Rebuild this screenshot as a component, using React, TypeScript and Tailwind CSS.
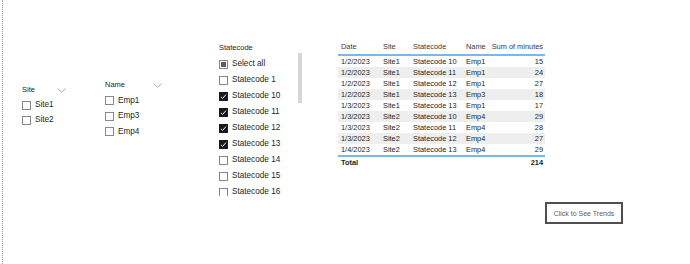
import React from "react";

const rows = [
  ["1/2/2023", "Site1", "Statecode 10", "Emp1", "15"],
  ["1/2/2023", "Site1", "Statecode 11", "Emp1", "24"],
  ["1/2/2023", "Site1", "Statecode 12", "Emp1", "27"],
  ["1/2/2023", "Site1", "Statecode 13", "Emp3", "18"],
  ["1/3/2023", "Site1", "Statecode 13", "Emp1", "17"],
  ["1/3/2023", "Site2", "Statecode 10", "Emp4", "29"],
  ["1/3/2023", "Site2", "Statecode 11", "Emp4", "28"],
  ["1/3/2023", "Site2", "Statecode 12", "Emp4", "27"],
  ["1/4/2023", "Site2", "Statecode 13", "Emp4", "29"],
];

const statecodes = [
  { label: "Statecode 1", checked: false },
  { label: "Statecode 10", checked: true },
  { label: "Statecode 11", checked: true },
  { label: "Statecode 12", checked: true },
  { label: "Statecode 13", checked: true },
  { label: "Statecode 14", checked: false },
  { label: "Statecode 15", checked: false },
  { label: "Statecode 16", checked: false },
];

function Chevron() {
  return (
    <svg width="9" height="5" viewBox="0 0 9 5" className="shrink-0">
      <path d="M0.5 0.5 L4.5 4.2 L8.5 0.5" fill="none" stroke="#a19f9d" strokeWidth="0.9" />
    </svg>
  );
}

function Box({ checked }: { checked?: boolean }) {
  if (checked) {
    return (
      <div className="w-[9px] h-[9px] shrink-0 bg-[#1b1a19] flex items-center justify-center">
        <svg width="7" height="7" viewBox="0 0 7 7">
          <path d="M1 3.8 L2.7 5.4 L6 1.6" fill="none" stroke="#ffffff" strokeWidth="0.9" />
        </svg>
      </div>
    );
  }
  return <div className="w-[9px] h-[9px] shrink-0 border border-[#8a8886] bg-white" />;
}

function Item({ label, checked, h }: { label: string; checked?: boolean; h: string }) {
  return (
    <div className={`flex items-center gap-[4px] ${h}`}>
      <Box checked={checked} />
      <span className="text-[8.2px] leading-none text-[#201f1e]">{label}</span>
    </div>
  );
}

export default function App() {
  return (
    <div
      className="w-[690px] h-[264px] bg-white flex overflow-hidden"
      style={{ fontFamily: '"Liberation Sans", Arial, sans-serif' }}
    >
      {/* page edge */}
      <div className="ml-[2px] h-full w-0 border-l border-dotted border-[#a19f9d]" />

      {/* Site slicer */}
      <div className="ml-[19px] mt-[85px] w-[44px] flex flex-col">
        <div className="flex items-center justify-between h-[10px]">
          <span className="text-[7.5px] leading-none text-[#201f1e]">Site</span>
          <Chevron />
        </div>
        <div className="mt-[3px] flex flex-col">
          <Item label="Site1" h="h-[15px]" />
          <Item label="Site2" h="h-[15px]" />
        </div>
      </div>

      {/* Name slicer */}
      <div className="ml-[39px] mt-[80px] w-[57px] flex flex-col">
        <div className="flex items-center justify-between h-[10px]">
          <span className="text-[7.5px] leading-none text-[#201f1e]">Name</span>
          <Chevron />
        </div>
        <div className="mt-[3px] flex flex-col">
          <Item label="Emp1" h="h-[15.5px]" />
          <Item label="Emp3" h="h-[15.5px]" />
          <Item label="Emp4" h="h-[15.5px]" />
        </div>
      </div>

      {/* Statecode slicer */}
      <div className="ml-[57px] mt-[43px] w-[83px] flex flex-col">
        <div className="h-[10px] flex items-center">
          <span className="text-[7.5px] leading-none text-[#201f1e]">Statecode</span>
        </div>
        <div className="flex">
          <div className="flex-1 h-[143px] overflow-hidden flex flex-col pt-[3px]">
            <div className="flex items-center gap-[4px] h-[16px] shrink-0">
              <div className="w-[9px] h-[9px] shrink-0 border border-[#8a8886] bg-white flex items-center justify-center">
                <div className="w-[5px] h-[5px] bg-[#605e5c]" />
              </div>
              <span className="text-[8.2px] leading-none text-[#201f1e]">Select all</span>
            </div>
            {statecodes.map((s) => (
              <Item key={s.label} label={s.label} checked={s.checked} h="h-[16px] shrink-0" />
            ))}
          </div>
          <div className="w-[4.5px] h-[50px] bg-[#d6d6d6]" />
        </div>
      </div>

      {/* Table + button */}
      <div className="ml-[36px] mt-[40px] w-[285px] flex flex-col">
        <div className="w-[207px] text-[7.4px] leading-none text-[#201f1e]">
          <div className="grid grid-cols-[42px_30px_53px_26px_56px] h-[16px] items-center border-b-2 border-[#7ab8ec] text-[#3b3a39]">
            <span className="pl-[3px]">Date</span>
            <span className="pl-[3px]">Site</span>
            <span className="pl-[3px]">Statecode</span>
            <span className="pl-[3px]">Name</span>
            <span className="text-right pr-[2px]">Sum of minutes</span>
          </div>
          <div className="border-b-2 border-[#7ab8ec]">
            {rows.map((r, i) => (
              <div
                key={i}
                className={`grid grid-cols-[42px_30px_53px_26px_56px] h-[11px] items-center ${
                  i % 2 === 1 ? "bg-[#eeeeee]" : "bg-white"
                }`}
              >
                <span className="pl-[3px]">{r[0]}</span>
                <span className="pl-[3px]">{r[1]}</span>
                <span className="pl-[3px]">{r[2]}</span>
                <span className="pl-[3px]">{r[3]}</span>
                <span className="text-right pr-[2px]">{r[4]}</span>
              </div>
            ))}
          </div>
          <div className="flex justify-between items-center h-[12px] font-bold text-[#201f1e]">
            <span className="pl-[3px]">Total</span>
            <span className="pr-[2px]">214</span>
          </div>
        </div>

        <div className="self-end mt-[33px] w-[78px] h-[22px] border-2 border-[#4f4f4f] flex items-center justify-center bg-white">
          <span className="text-[7px] leading-none text-[#605e5c]">Click to See Trends</span>
        </div>
      </div>
    </div>
  );
}
